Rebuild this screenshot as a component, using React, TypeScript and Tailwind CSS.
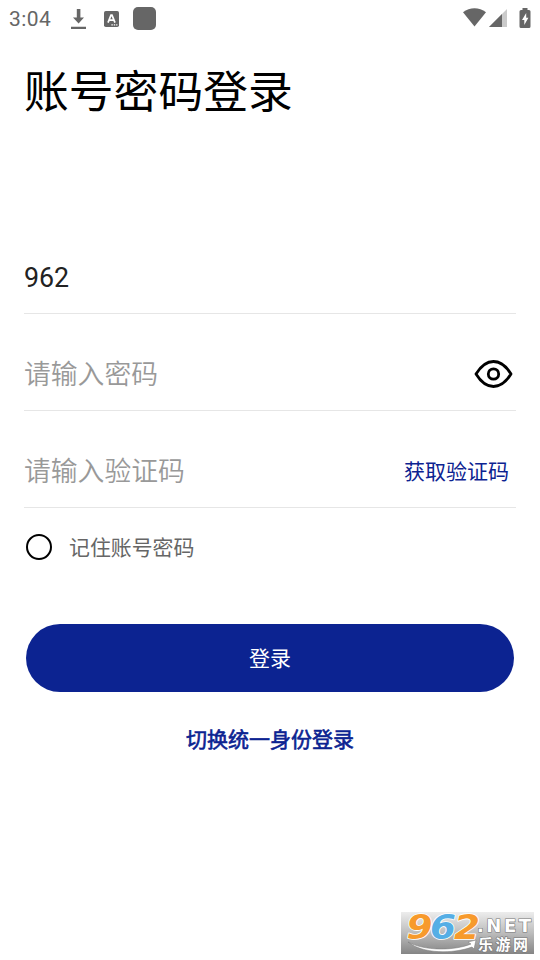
import { useState } from "react";
import type { ReactNode } from "react";

function StatusBar() {
  return (
    <header className="flex h-[37px] items-center justify-between pr-[9px] pl-[9px] text-[#666666]">
      <div className="flex items-center">
        <span className="w-[62px] pt-[2px] font-[Roboto] text-[21px] leading-none tracking-[0.4px]">3:04</span>
        <svg className="h-[20px] w-[15px]" viewBox="0 0 15 20" fill="currentColor">
          <path d="M5.8 0h3.6v8.4h3.6L7.6 14.4 2 8.4h3.8zM0 17.8h15V20H0z" />
        </svg>
        <svg className="ml-[18px] h-[16px] w-[15px]" viewBox="0 0 15 16">
          <rect width="15" height="16" rx="1.8" fill="currentColor" />
          <path d="M4 11.6 7 4.2h1l3 7.4M5 9.2h5" fill="none" stroke="#fff" strokeWidth="1.7" />
          <path d="M7.4 13.2h1.4v1.2H7.4zM9.8 13.2h1.4v1.2H9.8zM12.2 13.2h1.2v1.2h-1.2z" fill="#fff" />
        </svg>
        <span className="ml-[14px] h-[23px] w-[23px] rounded-[5px] bg-[#666666]" />
      </div>
      <div className="flex items-center pb-[2px]">
        <svg className="h-[19px] w-[23px]" viewBox="0 0 23 19" fill="currentColor">
          <path d="M0 4.3C6.8-1.1 16.2-1.1 23 4.3L11.5 18.5z" />
        </svg>
        <svg className="ml-[3px] h-[18px] w-[18px]" viewBox="0 0 18 18" fill="currentColor">
          <path d="M18 0v18H0z" opacity=".35" />
          <path d="M13 5v13H0z" />
        </svg>
        <svg className="ml-[12px] h-[20px] w-[12px]" viewBox="0 0 12 20">
          <path
            d="M3.5 0h5v2H10a1.5 1.5 0 0 1 1.5 1.5v15A1.5 1.5 0 0 1 10 20H2a1.5 1.5 0 0 1-1.5-1.5v-15A1.5 1.5 0 0 1 2 2h1.5z"
            fill="currentColor"
          />
          <path d="M7.2 5 3 12h2.3v5L9.4 9.8H7.2z" fill="#fff" />
        </svg>
      </div>
    </header>
  );
}

function Field({
  value,
  placeholder,
  type = "text",
  children
}: {
  value?: string;
  placeholder?: string;
  type?: string;
  children?: ReactNode;
}) {
  return (
    <div className="flex h-[97px] items-end justify-between border-b border-[#e6e6e6]">
      <input
        type={type}
        defaultValue={value}
        placeholder={placeholder}
        className="h-[72px] w-[300px] min-w-0 bg-transparent pt-[2px] text-[26.8px] text-[#222222] outline-none placeholder:font-[350] placeholder:text-[#999999]"
      />
      {children}
    </div>
  );
}

function EyeIcon() {
  return (
    <svg className="h-[30px] w-[39px]" viewBox="0 0 39 30" fill="none" stroke="#000" strokeWidth="2.8">
      <path
        d="M2 15C6.2 8.2 11 2.5 19.5 2.5S32.8 8.2 37 15C32.8 21.8 28 27.5 19.5 27.5S6.2 21.8 2 15z"
        strokeLinejoin="round"
      />
      <circle cx="19.5" cy="15" r="5.2" />
    </svg>
  );
}

function Watermark() {
  return (
    <svg className="absolute top-[912px] left-[401px] h-[42px] w-[133px] overflow-visible" viewBox="0 0 133 42">
      <defs>
        <linearGradient id="plate" x1="0" y1="0" x2="0" y2="1">
          <stop offset="0" stopColor="#ededed" />
          <stop offset="0.5" stopColor="#bcbcbc" />
          <stop offset="1" stopColor="#858585" />
        </linearGradient>
      </defs>
      <rect width="133" height="42" fill="url(#plate)" />
      <path d="M7 30c16 9 46 9 63 2l-3-2 8-2-2 9-2-2C52 42 22 42 7 30z" fill="#fff" stroke="#777" strokeWidth=".5" />
      <g
        fontFamily="DejaVu Sans, sans-serif"
        fontWeight="bold"
        fontStyle="italic"
        fontSize="33"
        stroke="#fff"
        strokeWidth="1.6"
        paintOrder="stroke"
        strokeLinejoin="round"
      >
        <text x="5.5" y="26.5" textLength="26" lengthAdjust="spacingAndGlyphs" fill="#f79a2c">9</text>
        <text x="29" y="26.5" textLength="26" lengthAdjust="spacingAndGlyphs" fill="#55aee5">6</text>
        <text x="53" y="26.5" textLength="26" lengthAdjust="spacingAndGlyphs" fill="#f79a2c">2</text>
      </g>
      <g fill="#fff" stroke="#777" strokeWidth="1.2" paintOrder="stroke" fontWeight="bold">
        <text x="76" y="20" fontSize="18" textLength="54" fontFamily="DejaVu Sans, sans-serif">.NET</text>
        <text x="77" y="38" fontSize="15" textLength="50" fontFamily="Noto Sans CJK SC, sans-serif">乐游网</text>
      </g>
    </svg>
  );
}

export default function App() {
  const [visible, setVisible] = useState(false);
  const [remember, setRemember] = useState(false);

  return (
    <main className="relative h-[960px] w-[540px] overflow-hidden bg-white font-[Roboto,'Noto_Sans_CJK_SC',sans-serif]">
      <StatusBar />
      <form className="px-6" onSubmit={(e) => e.preventDefault()}>
        <h1 className="mt-[23px] h-[66px] text-[44.8px] leading-[66px] text-black">账号密码登录</h1>

        <div className="mt-[91px]">
          <Field value="962" />
          <Field placeholder="请输入密码" type={visible ? "text" : "password"}>
            <button type="button" className="mr-[3px] mb-[21px]" onClick={() => setVisible(!visible)}>
              <EyeIcon />
            </button>
          </Field>
          <Field placeholder="请输入验证码">
            <button type="button" className="mr-[7px] h-[72px] pt-[4px] text-[21px] text-[#0c2391]">
              获取验证码
            </button>
          </Field>
        </div>

        <label className="mt-[23px] flex h-8 items-center text-[20.9px] text-[#666666]">
          <input
            type="checkbox"
            checked={remember}
            onChange={(e) => setRemember(e.target.checked)}
            className="mr-[17px] ml-[2px] h-[26px] w-[26px] appearance-none rounded-full border-2 border-black checked:bg-[#0c2391]"
          />
          <span className="pt-[4px]">记住账号密码</span>
        </label>

        <button className="mx-auto mt-[61px] block h-[68px] w-[488px] rounded-full bg-[#0c2391] pt-[4px] text-[21px] text-white">
          登录
        </button>
        <button
          type="button"
          className="mx-auto mt-[32px] block h-8 text-[21px] leading-8 text-[#0c2391] [-webkit-text-stroke:0.6px_#0c2391]"
        >
          切换统一身份登录
        </button>
      </form>
      <Watermark />
    </main>
  );
}
